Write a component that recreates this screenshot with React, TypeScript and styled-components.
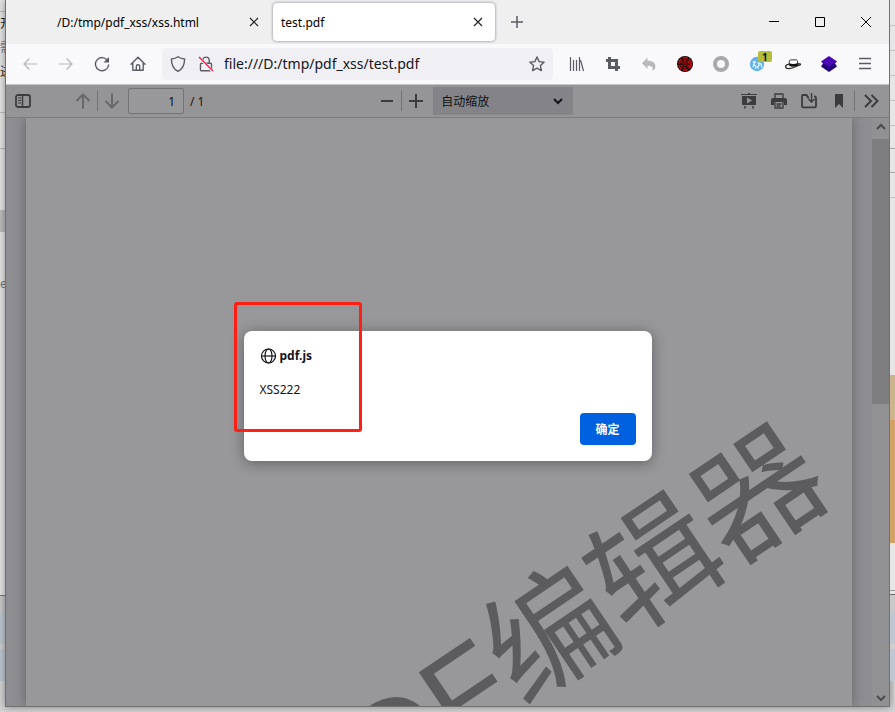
import React from "react";
import styled, { createGlobalStyle } from "styled-components";

const Global = createGlobalStyle`
  * { box-sizing: border-box; }
  html, body { margin: 0; padding: 0; }
  body {
    font-family: "Noto Sans", "Noto Sans CJK SC", sans-serif;
    font-size: 12px;
    color: #15141a;
    background: #d4d4d4;
    overflow: hidden;
  }
  button, input, select { font: inherit; color: inherit; margin: 0; padding: 0; border: 0; background: none; }
`;

/* ---------- desktop behind the window ---------- */

const Desktop = styled.div`
  display: grid;
  grid-template-columns: 5px minmax(0, 1fr) 5px;
  height: 100vh;
  overflow: hidden;
`;

const Strip = styled.div`
  display: flex;
  flex-direction: column;
  overflow: hidden;
`;

const Band = styled.div<{ $h: number; $bg?: string; $line?: string }>`
  flex: 0 0 ${(p) => p.$h}px;
  background: ${(p) => p.$bg ?? "#e6e6e7"};
  border-bottom: ${(p) => (p.$line ? `1px solid ${p.$line}` : "0")};
  line-height: ${(p) => p.$h}px;
  overflow: hidden;
  white-space: nowrap;
  display: flex;
  justify-content: flex-start;
`;

const Clipped = styled.span<{ $dim?: boolean }>`
  flex: none;
  color: ${(p) => (p.$dim ? "#777" : "#222")};
`;

/* ---------- browser window ---------- */

const Browser = styled.main`
  display: flex;
  flex-direction: column;
  min-height: 0;
  margin-bottom: 5px;
  border: 1px solid #707072;
  border-top: 0;
  background: #f9f9fb;
  box-shadow: 0 0 8px rgba(0, 0, 0, 0.4);
`;

const TabBar = styled.header`
  display: flex;
  height: 44px;
  flex: none;
  background: #efefef;
  padding-left: 43px;
`;

const Tabs = styled.div`
  display: flex;
  align-items: center;
  gap: 2px;
`;

const Tab = styled.div<{ $active?: boolean }>`
  display: flex;
  align-items: center;
  width: 222px;
  height: 38px;
  padding: 0 5px 0 8px;
  border-radius: 4px;
  background: ${(p) => (p.$active ? "#fff" : "transparent")};
  box-shadow: ${(p) => (p.$active ? "0 0 3px #77778a" : "none")};
`;

const TabLabel = styled.button`
  flex: 1;
  min-width: 0;
  text-align: left;
  white-space: nowrap;
  color: #000;
`;

const IconButton = styled.button<{ $w?: number; $h?: number; $color?: string }>`
  position: relative;
  display: flex;
  align-items: center;
  justify-content: center;
  flex: none;
  width: ${(p) => p.$w ?? 36}px;
  height: ${(p) => p.$h ?? 40}px;
  color: ${(p) => p.$color ?? "#5b5b66"};
  svg { display: block; }
`;

const WindowControls = styled.div`
  display: flex;
  margin-left: auto;
`;

const NavBar = styled.nav`
  display: flex;
  align-items: center;
  flex: none;
  height: 41px;
  padding: 0 6px;
  background: #f9f9fb;
  border-bottom: 1px solid #c6c6c8;
`;

const UrlBar = styled.div`
  display: flex;
  align-items: center;
  flex: 1;
  min-width: 0;
  height: 32px;
  margin: 0 6px;
  padding: 0 2px;
  border-radius: 4px;
  background: #f0f0f4;
`;

const UrlInput = styled.input`
  flex: 1;
  min-width: 0;
  height: 32px;
  margin-left: 4px;
  padding-bottom: 2px;
  font-size: 14px;
  font-family: "Noto Sans", sans-serif;
  outline: none;
`;

const Badge = styled.span`
  position: absolute;
  top: 7px;
  right: 3px;
  width: 14px;
  height: 11px;
  border-radius: 2px;
  background: #b4be3c;
  color: #000;
  font-size: 11px;
  font-weight: 600;
  line-height: 11px;
  text-align: center;
`;

/* ---------- document viewer ---------- */

const Content = styled.section`
  position: relative;
  display: flex;
  flex-direction: column;
  flex: 1;
  min-height: 0;
  background: #8d8d92;
`;

const PdfToolbar = styled.div`
  display: flex;
  justify-content: space-between;
  flex: none;
  height: 33px;
  padding: 0 1px 0 3px;
  background: #959597;
  border-bottom: 1px solid #7c7c7e;
`;

const Group = styled.div<{ $end?: number }>`
  display: flex;
  align-items: center;
  padding-right: ${(p) => p.$end ?? 0}px;
`;

const Spacer = styled.span`
  width: 32px;
`;

const Divider = styled.span`
  width: 1px;
  height: 20px;
  background: #737375;
`;

const PageInput = styled.input`
  width: 56px;
  height: 26px;
  padding-right: 8px;
  margin: 0 6px 0 2px;
  border: 1px solid #737376;
  border-radius: 2px;
  background: #98989a;
  color: #101014;
  text-align: right;
`;

const ZoomBox = styled.div`
  position: relative;
  display: flex;
  align-items: center;
  margin-left: 3px;
  svg { position: absolute; right: 10px; pointer-events: none; }
`;

const ZoomSelect = styled.select`
  appearance: none;
  width: 140px;
  height: 28px;
  padding: 0 24px 0 8px;
  background: #848488;
  color: #101014;
  border-radius: 1px;
`;

const Viewer = styled.div`
  display: flex;
  flex: 1;
  min-height: 0;
`;

const PageArea = styled.div`
  display: flex;
  flex: 1;
  min-width: 0;
  overflow: hidden;
`;

const Page = styled.article`
  position: relative;
  flex: 1;
  margin: 0 20px;
  background: #98989a;
  box-shadow: 0 0 10px rgba(60, 60, 60, 0.5);
`;

const Watermark = styled.p`
  position: absolute;
  right: 40px;
  bottom: 183px;
  margin: 0;
  color: #5c5c5e;
  font-family: "Liberation Sans", "Noto Sans CJK SC", sans-serif;
  font-size: 126px;
  line-height: 126px;
  white-space: nowrap;
  transform: rotate(-34deg);
  transform-origin: 100% 50%;
`;

const Scrollbar = styled.div`
  display: flex;
  flex-direction: column;
  width: 17px;
  background: #919193;
`;

const Thumb = styled.div`
  height: 45%;
  margin-top: 4px;
  background: #7d7d7f;
`;

const ScrollSpace = styled.div`
  flex: 1;
`;

/* ---------- alert ---------- */

const Overlay = styled.div`
  position: absolute;
  inset: 0;
  display: grid;
  place-items: center;
`;

const Dialog = styled.div`
  position: relative;
  display: flex;
  flex-direction: column;
  width: 408px;
  padding: 17px 16px 16px;
  border-radius: 8px;
  background: #fff;
  box-shadow: 0 2px 14px rgba(30, 30, 40, 0.45);
`;

const DialogTitle = styled.h2`
  display: flex;
  align-items: center;
  gap: 4px;
  margin: 0;
  font-size: 12px;
  line-height: 16px;
  font-weight: 700;
`;

const Message = styled.p`
  margin: 18px 0 15px;
  line-height: 16px;
`;

const OkButton = styled.button`
  align-self: flex-end;
  width: 56px;
  height: 32px;
  border-radius: 4px;
  background: #0061e0;
  color: #fff;
  font-weight: 700;
`;

const Highlight = styled.div`
  position: absolute;
  left: -10px;
  top: -29px;
  width: 128px;
  height: 130px;
  border: 3px solid #ff2015;
  border-radius: 3px;
  pointer-events: none;
`;

/* ---------- icons ---------- */

const Svg = ({ s = 16, w = 1.2, children }: { s?: number; w?: number; children: React.ReactNode }) => (
  <svg width={s} height={s} viewBox={`0 0 ${s} ${s}`} fill="none" stroke="currentColor" strokeWidth={w} aria-hidden="true">
    {children}
  </svg>
);

const Close = () => <Svg s={10} w={1.2}><path d="M1 1l8 8M9 1L1 9" /></Svg>;
const Plus = () => <Svg s={12} w={1.5}><path d="M6 0v12M0 6h12" /></Svg>;
const Back = () => <Svg><path d="M15 8H2M7.500 2.500L2 8l5.500 5.500" strokeLinejoin="round" /></Svg>;
const Forward = () => <Svg><path d="M1 8h13M8.500 2.500L14 8l-5.500 5.500" strokeLinejoin="round" /></Svg>;
const Reload = () => (
  <Svg w={1.4}>
    <path d="M13.600 4.600A6.600 6.600 0 1 0 14.600 9" strokeLinecap="round" />
    <path d="M15 1v5.500H9.500z" fill="currentColor" stroke="none" />
  </Svg>
);
const Home = () => (
  <Svg w={1.4}>
    <path d="M1 8.200L8 1.300l7 6.900M2.800 7v7.300h10.400V7M6.300 14v-3.500a1.700 1.700 0 0 1 3.400 0V14" strokeLinejoin="round" strokeLinecap="round" />
  </Svg>
);
const Shield = () => (
  <Svg w={1.4}><path d="M8 .8c2 1.500 4.300 2 6.600 2.200C14.600 9 12.800 13 8 15.300 3.200 13 1.400 9 1.400 3 3.700 2.800 6 2.300 8 .8z" strokeLinejoin="round" /></Svg>
);
const Lock = () => (
  <Svg w={1.4}>
    <path d="M4.800 7V4.300a3.200 3.200 0 0 1 6.400 0V7M3.500 7.300h9a1 1 0 0 1 1 1v5.400a1 1 0 0 1-1 1h-9a1 1 0 0 1-1-1V8.300a1 1 0 0 1 1-1z" />
    <path d="M1 1.500l14 14" stroke="#f0f0f4" strokeWidth="3" />
    <path d="M1 1l14 14" stroke="#e22850" />
  </Svg>
);
const Star = () => (
  <Svg w={1.4}><path d="M8 1l2.100 4.600 5 .6-3.700 3.400 1 5L8 12.100l-4.400 2.500 1-5L.9 6.200l5-.6z" strokeLinejoin="round" /></Svg>
);
const Library = () => <Svg w={1.2}><path d="M1.500 1v14M4.500 4v11M7.500 4v11M10.500 1v14M11.500 4l3 11" /></Svg>;
const Crop = () => <Svg w={3}><path d="M4.500 1v10.500H15M1 4.500h10.500V15" /></Svg>;
const Undo = () => (
  <Svg><path d="M6.500 1.500v3.300c5 0 8 2 8 5.700 0 2-1.300 3.700-3.300 4.200 1.300-3.500-.7-5-4.700-4.900v3.200L1 7.200z" fill="currentColor" stroke="none" /></Svg>
);
const RedEye = () => (
  <Svg>
    <circle cx="8" cy="8" r="8" fill="#170506" stroke="none" />
    <circle cx="8" cy="8" r="6" stroke="#c90c12" strokeWidth="2" strokeDasharray="5 1.283" />
    {[0, 60, 120, 180, 240, 300].map((a) => (
      <circle key={a} cx="8" cy="4.200" r="1.500" fill="#d20b12" stroke="#170506" strokeWidth=".8" transform={`rotate(${a} 8 8)`} />
    ))}
    <circle cx="8" cy="8" r="2.400" fill="#b8090f" stroke="#170506" strokeWidth=".8" />
    <circle cx="8" cy="8" r=".9" fill="#170506" stroke="none" />
  </Svg>
);
const Ring = () => <Svg><circle cx="8" cy="8" r="6" stroke="#a9a9a9" strokeWidth="4" /></Svg>;
const BlueBall = () => (
  <Svg>
    <circle cx="8" cy="8" r="7.200" fill="#63b1ee" stroke="none" />
    <path d="M3.500 6h3.500M6 5L4 11M4.500 8.500l3 2M8.500 7.500c1.500-1.500 3 0 1.500 1.500s-2 3 0 3.200M11.500 7l1.500 4.500M6 12.500l1.500-1.500" stroke="#eef8ff" strokeWidth="1.200" />
  </Svg>
);
const Hat = () => (
  <Svg>
    <path d="M4.300 8.500c-.4-3 .2-4.700 2-4.700 1.300 0 2.200.4 3.600 0 2.300-.5 2.800 1 2.900 4.200" stroke="#333" strokeWidth="1" fill="#fff" />
    <path d="M4.200 7.300c2.500 1 6 1 8.600-.2l.3 2.200c-2.800 1.700-6.300 1.900-8.800.7z" fill="#111" stroke="none" />
    <path d="M4.200 8.200C-.8 9.200-.5 12.600 4 12.600c5 0 7-2.700 11.600-4 .5-.8-1-1-2.800-.8" stroke="#222" />
  </Svg>
);
const Layers = () => (
  <Svg>
    <path d="M0 5l2 2.500L0 10.500 8 16l8-5.500-2-3L16 5l-8 4z" fill="#22007a" stroke="none" />
    <path d="M8 0l8 5.500L8 11 0 5.500z" fill="#4a05b5" stroke="none" />
  </Svg>
);
const Menu = () => <Svg w={1.3}><path d="M2 2.500h12M2 7.500h12M2 12.500h12" /></Svg>;

const Sidebar = () => (
  <Svg w={1.800}>
    <rect x="1" y="2" width="14" height="12" rx="2" />
    <path d="M7.500 2v12" strokeWidth="1.500" />
    <path d="M3 5h3M3 7.500h3M3 10h3" strokeWidth="1" />
  </Svg>
);
const Up = () => <Svg w={2}><path d="M8 15.500V2M1.500 8L8 1.500 14.500 8" /></Svg>;
const Down = () => <Svg w={2}><path d="M8 .5V14M1.500 8L8 14.500 14.500 8" /></Svg>;
const Minus = () => <Svg w={2}><path d="M2 8h12" /></Svg>;
const ZoomPlus = () => <Svg w={2}><path d="M1 8h14M8 1v14" /></Svg>;
const Present = () => (
  <Svg>
    <path d="M0 1h7V0h2v1h7v1H0zM1 3h14v9H1zM6 4.500v6l5-3z" fill="currentColor" stroke="none" fillRule="evenodd" />
    <path d="M4.500 13l-1 2.500M11.500 13l1 2.500" strokeWidth="1.500" />
  </Svg>
);
const Print = () => (
  <Svg w={1.500}>
    <path d="M0 7a2 2 0 0 1 2-2h12a2 2 0 0 1 2 2v5h-3V9H3v3H0z" fill="currentColor" stroke="none" />
    <path d="M4 5V1h8v4M4 9v6h8V9M5.500 11h5M5.500 13h4" strokeWidth="1.300" />
  </Svg>
);
const Download = () => (
  <Svg w={1.800}>
    <path d="M8 4.500H7L5.500 2H2a1 1 0 0 0-1 1v10a1.300 1.300 0 0 0 1.300 1.300h11.400A1.300 1.300 0 0 0 15 13V5a1.500 1.500 0 0 0-1.500-1.500H13" />
    <path d="M10.500 0v8.500M7.500 6l3 3 3-3" strokeWidth="1.400" />
  </Svg>
);
const Bookmark = () => <Svg><path d="M4 1h8v14l-4-4-4 4z" fill="currentColor" stroke="none" /></Svg>;
const More = () => <Svg w={2}><path d="M2 2l6 6-6 6M8.500 2l6 6-6 6" /></Svg>;
const ChevronDown = () => <Svg s={10} w={2}><path d="M1 3l4 4 4-4" /></Svg>;
const ChevronUp = () => <Svg s={10} w={2}><path d="M1 7l4-4 4 4" /></Svg>;
const Globe = () => (
  <Svg w={1.200}>
    <circle cx="8.500" cy="8" r="7" />
    <ellipse cx="8.500" cy="8" rx="3.500" ry="7" />
    <path d="M1.500 8h14" />
  </Svg>
);

const navButtons = [
  { label: "后退", icon: <Back />, color: "#b5b5b9" },
  { label: "前进", icon: <Forward />, color: "#b5b5b9" },
  { label: "刷新", icon: <Reload /> },
  { label: "主页", icon: <Home /> },
];

const extensionButtons = [
  { label: "书库", icon: <Library /> },
  { label: "截图", icon: <Crop /> },
  { label: "撤销", icon: <Undo />, color: "#b9b9bc" },
  { label: "扩展一", icon: <RedEye /> },
  { label: "扩展二", icon: <Ring /> },
  { label: "扩展三", icon: <BlueBall />, badge: "1" },
  { label: "扩展四", icon: <Hat /> },
  { label: "扩展五", icon: <Layers /> },
  { label: "菜单", icon: <Menu /> },
];

const pdfButtons = [
  { label: "演示模式", icon: <Present /> },
  { label: "打印", icon: <Print /> },
  { label: "下载", icon: <Download /> },
  { label: "书签", icon: <Bookmark /> },
];

const ink = "#3c3c3f";

export default function App() {
  return (
    <>
      <Global />
      <Desktop>
        <Strip aria-hidden="true">
          <Band $h={12} $line="#bbb" />
          <Band $h={24}><Clipped>开</Clipped></Band>
          <Band $h={24}><Clipped $dim>需</Clipped></Band>
          <Band $h={24}><Clipped>进</Clipped></Band>
          <Band $h={29} $line="#c0c0c0" />
          <Band $h={36} $line="#b4b4b4" />
          <Band $h={61} />
          <Band $h={22} $bg="#bdbdbd" />
          <Band $h={42} />
          <Band $h={20}><Clipped $dim>e</Clipped></Band>
          <Band $h={302} $line="#777" />
          <Band $h={16} $bg="#c9c9c9" />
          <Band $h={32} $bg="#bfc8d2" />
          <Band $h={5} $bg="#cfcfcf" />
          <Band $h={32} $bg="#bfc8d2" />
        </Strip>

        <Browser>
          <TabBar>
            <Tabs role="tablist">
              <Tab>
                <TabLabel role="tab" aria-selected="false">/D:/tmp/pdf_xss/xss.html</TabLabel>
                <IconButton $w={24} $h={24} $color="#222" aria-label="关闭标签页"><Close /></IconButton>
              </Tab>
              <Tab $active>
                <TabLabel role="tab" aria-selected="true">test.pdf</TabLabel>
                <IconButton $w={24} $h={24} $color="#222" aria-label="关闭标签页"><Close /></IconButton>
              </Tab>
            </Tabs>
            <IconButton $w={44} $h={44} aria-label="新建标签页"><Plus /></IconButton>
            <WindowControls>
              <IconButton $w={46} $h={44} $color="#000" aria-label="最小化">
                <Svg s={10} w={1}><path d="M0 4.500h10" /></Svg>
              </IconButton>
              <IconButton $w={46} $h={44} $color="#000" aria-label="最大化">
                <Svg s={10} w={1}><path d="M.5.5h9v9h-9z" /></Svg>
              </IconButton>
              <IconButton $w={46} $h={44} $color="#000" aria-label="关闭">
                <Svg s={10} w={1}><path d="M0 0l10 10M10 0L0 10" /></Svg>
              </IconButton>
            </WindowControls>
          </TabBar>

          <NavBar>
            {navButtons.map((b) => (
              <IconButton key={b.label} $color={b.color} aria-label={b.label}>{b.icon}</IconButton>
            ))}
            <UrlBar>
              <IconButton $w={28} $h={32} aria-label="跟踪保护"><Shield /></IconButton>
              <IconButton $w={28} $h={32} aria-label="连接不安全"><Lock /></IconButton>
              <UrlInput aria-label="地址" defaultValue="file:///D:/tmp/pdf_xss/test.pdf" />
              <IconButton $w={28} $h={32} aria-label="收藏"><Star /></IconButton>
            </UrlBar>
            {extensionButtons.map((b) => (
              <IconButton key={b.label} $color={b.color} aria-label={b.label}>
                {b.icon}
                {b.badge && <Badge>{b.badge}</Badge>}
              </IconButton>
            ))}
          </NavBar>

          <Content>
            <PdfToolbar>
              <Group $end={8}>
                <IconButton $w={28} $h={32} $color={ink} aria-label="侧栏"><Sidebar /></IconButton>
                <Spacer />
                <IconButton $w={28} $h={32} $color="#68686b" aria-label="上一页"><Up /></IconButton>
                <Divider />
                <IconButton $w={28} $h={32} $color="#68686b" aria-label="下一页"><Down /></IconButton>
                <PageInput aria-label="页码" defaultValue="1" />
                <span>/ 1</span>
              </Group>
              <Group>
                <IconButton $w={28} $h={32} $color={ink} aria-label="缩小"><Minus /></IconButton>
                <Divider />
                <IconButton $w={28} $h={32} $color={ink} aria-label="放大"><ZoomPlus /></IconButton>
                <ZoomBox>
                  <ZoomSelect aria-label="缩放" defaultValue="auto">
                    <option value="auto">自动缩放</option>
                  </ZoomSelect>
                  <ChevronDown />
                </ZoomBox>
              </Group>
              <Group>
                {pdfButtons.map((b) => (
                  <IconButton key={b.label} $w={30} $h={32} $color={ink} aria-label={b.label}>{b.icon}</IconButton>
                ))}
                <Divider />
                <IconButton $w={33} $h={32} $color={ink} aria-label="工具"><More /></IconButton>
              </Group>
            </PdfToolbar>

            <Viewer>
              <PageArea>
                <Page>
                  <Watermark>PDF编辑器</Watermark>
                </Page>
              </PageArea>
              <Scrollbar>
                <IconButton $w={17} $h={17} $color="#4b4b4d" aria-label="向上滚动"><ChevronUp /></IconButton>
                <Thumb />
                <ScrollSpace />
                <IconButton $w={17} $h={17} $color="#4b4b4d" aria-label="向下滚动"><ChevronDown /></IconButton>
              </Scrollbar>
            </Viewer>

            <Overlay>
              <Dialog role="alertdialog" aria-labelledby="alert-title" aria-describedby="alert-message">
                <DialogTitle id="alert-title"><Globe />pdf.js</DialogTitle>
                <Message id="alert-message">XSS222</Message>
                <OkButton>确定</OkButton>
                <Highlight />
              </Dialog>
            </Overlay>
          </Content>
        </Browser>

        <Strip aria-hidden="true">
          <Band $h={26} $line="#c4c4c4" />
          <Band $h={25} $line="#c4c4c4" />
          <Band $h={25} $line="#c4c4c4" />
          <Band $h={25} $line="#c4c4c4" />
          <Band $h={25} $line="#c4c4c4" />
          <Band $h={23} $line="#a8a8a8" />
          <Band $h={24} $line="#a8a8a8" />
          <Band $h={25} $line="#c4c4c4" />
          <Band $h={177} />
          <Band $h={45} $bg="#ccb48e" />
          <Band $h={123} $bg="#d0a364" />
          <Band $h={48} $line="#999" />
          <Band $h={4} $line="#666" />
          <Band $h={17} $bg="#c9c9c9" />
          <Band $h={32} $bg="#bfc8d2" />
          <Band $h={5} $bg="#cfcfcf" />
          <Band $h={32} $bg="#bfc8d2" />
        </Strip>
      </Desktop>
    </>
  );
}
